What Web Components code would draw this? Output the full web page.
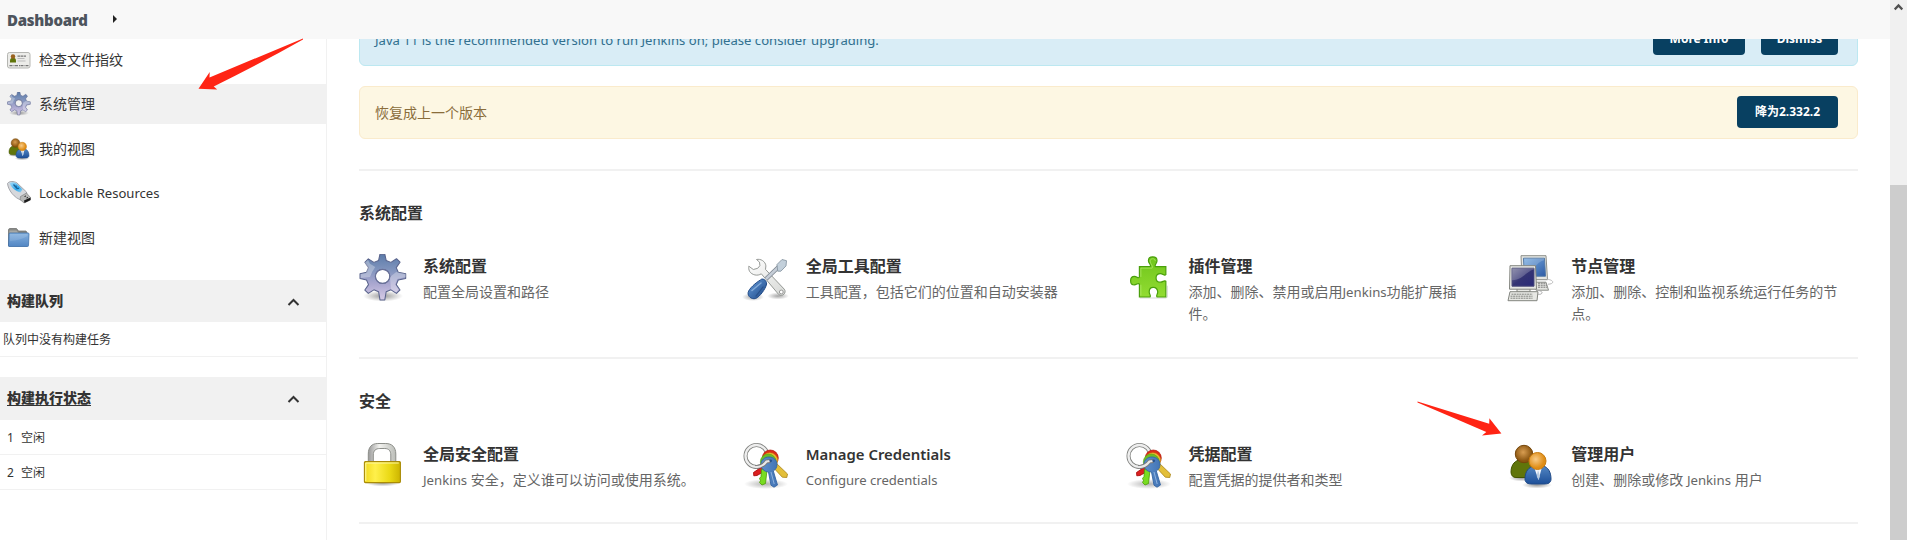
<!DOCTYPE html>
<html lang="zh-CN">
<head>
<meta charset="utf-8">
<title>系统管理 [Jenkins]</title>
<style>
html,body{margin:0;height:100%;overflow:hidden;background:#fff}
body{font:14px/22px "Noto Sans","Noto Sans CJK SC",sans-serif;color:#333}
</style>
</head>
<body>
<jk-page></jk-page>
<script>
const define = (name, html) => {
  const t = document.createElement('template');
  t.innerHTML = html;
  customElements.define(name, class extends HTMLElement {
    constructor() {
      super();
      this.attachShadow({mode: 'open'}).appendChild(t.content.cloneNode(true));
    }
  });
};

const ICONS = {
gear: `<defs><linearGradient id="g" x1="0" y1="0" x2="0" y2="1"><stop offset="0" stop-color="#5b7ba9"/><stop offset=".35" stop-color="#8194bd"/><stop offset=".65" stop-color="#aaa7d0"/><stop offset="1" stop-color="#d6cbe6"/></linearGradient><radialGradient id="s"><stop offset="0" stop-opacity=".4"/><stop offset="1" stop-opacity="0"/></radialGradient></defs>
<ellipse cx="24" cy="42" rx="20" ry="5.5" fill="url(#s)"/>
<g transform="translate(-1.6 -1.4) scale(1.05 1.02)"><path fill-rule="evenodd" fill="url(#g)" stroke="#59638c" stroke-linejoin="round" d="M21.5 1.5h4.6l1.3 6.2 4.5 1.9 5.3-3.6 3.4 3.4-3.6 5.3 1.9 4.6 7.1 1.4v4.7l-7.1 1.5-1.9 4.5 3.6 5.2-3.4 3.4-5.2-3.5-4.6 1.9-1.3 8h-4.6l-1.3-8-4.5-1.9-5.3 3.5-3.3-3.3 3.5-5.3-1.9-4.5-6.2-1.5v-4.7l6.2-1.4 1.9-4.6-3.5-5.2 3.3-3.4 5.3 3.5 4.5-1.9zM24 16.5a6.8 6.8 0 1 0 0 13.6 6.8 6.8 0 0 0 0-13.6z"/>
<path fill="#fff" opacity=".3" d="M12 11l5 3-3 5-2 5-9 1v-4l5-1 2-5-3-5 3-3zM31 24l6-5 9 2v3l-8 2-2 5 3 5-2 3-5-3z"/>
<circle cx="24" cy="23.3" r="7" fill="none" stroke="#6b7299"/></g>`,
tools: `<defs><linearGradient id="b" x1="0" x2="1" y1="0" y2="1"><stop stop-color="#6c9fda"/><stop offset=".5" stop-color="#4071b0"/><stop offset="1" stop-color="#234985"/></linearGradient><linearGradient id="w" x1="0" x2="1" y1="0" y2="1"><stop stop-color="#fff"/><stop offset="1" stop-color="#d6d8d5"/></linearGradient><radialGradient id="s"><stop offset="0" stop-opacity=".35"/><stop offset="1" stop-opacity="0"/></radialGradient></defs>
<ellipse cx="11" cy="43" rx="11" ry="4" fill="url(#s)"/><ellipse cx="36" cy="42" rx="11" ry="3.5" fill="url(#s)"/>
<path fill="url(#w)" stroke="#8b8e8b" stroke-width=".9" d="M14.500 5.500c4-1 9 1.800 9.400 6.400l-.4 3.500 18.700 19.700c3 3.600-2 8.400-5.600 5.300L19.300 19.800c-3.800 2.600-9.400 1.200-11.700-2.400-.9-1.800-1-3.400-.8-5.200l4.500 3.300 4.400-1.200 2.200-2.600-.4-3.600z"/>
<circle cx="39.300" cy="38" r="1.900" fill="#fff" stroke="#999"/>
<path d="M24 25L37 12.500" stroke="#818993" stroke-width="4.300"/><path d="M24 25L37 12.500" stroke="#c5cdd7" stroke-width="2.500"/>
<path d="M35 10.500l5-5 4.500 1.200-.5 5.200-5.100 5.300h-3.200z" fill="#c3d0db" stroke="#8997a4" stroke-width=".9"/>
<path fill="url(#b)" stroke="#204a87" d="M18.400 26c2-2.500 6.400.2 6.200 4-1 5-7 13-11 14.500-4 1.200-8-2.200-7.500-5.800.6-4 8.200-10.400 12.300-12.700z"/><path d="M10 36.500l9-7.500" stroke="#9dc0e8" stroke-width="1.500" opacity=".7" stroke-linecap="round"/><path d="M14 42l7-9" stroke="#1d4379" stroke-width="1.200" opacity=".6" stroke-linecap="round"/>`,
plugin: `<defs><linearGradient id="p" x1="0" y1="0" x2="0" y2="1"><stop stop-color="#6fc51a"/><stop offset="1" stop-color="#92dc32"/></linearGradient></defs>
<g transform="translate(-.8 -.6) scale(.98)"><path d="M16 45.500h27l1-1V33" fill="none" stroke="#bbb" opacity=".6"/>
<path fill="url(#p)" stroke="#4aa00b" stroke-width="1.200" d="M15.500 13.500h11.200c1-2.500-2-3.300-2-6 0-5.300 8.800-5.300 8.800 0 0 2.700-2.700 3.800-1.800 6h10.800v8.200c-1.500 1.500-3.100-1-5.500-1-6 0-6 8.700 0 8.700 2.400 0 4-2.500 5.500-1v16.100h-9c-1.500-1.300 1-2.900.7-5.400-.7-6-8.700-5.800-8.700.2 0 2.400 2.300 3.700.8 5.200H15.500V31.400c-1.200-2-2.900.8-5 .8-5.300 0-5.300-8.800 0-8.800 2.300 0 4.100 2.700 5 .8z"/>
<path fill="none" stroke="#b6ee75" opacity=".65" d="M17 24v-9h11.500c1.500-2-2-4-2-7.300 0-3 5.200-3 5.200 0M17 43V32"/></g>`,
nodes: `<defs><linearGradient id="a" x1="0" x2="1" y1="0" y2="1"><stop stop-color="#7baee1"/><stop offset="1" stop-color="#2d5aa5"/></linearGradient><linearGradient id="c" x1="0" x2="1" y1="0" y2="1"><stop stop-color="#77779a"/><stop offset=".5" stop-color="#343473"/><stop offset="1" stop-color="#2a2a78"/></linearGradient></defs>
<g transform="translate(-1 -.8)"><g stroke="#8c8e89" fill="#e4e5e1"><path d="M15 2.500h25l1.500 24H16z"/><path d="M29 29h11l2.500 8H30z"/></g><path d="M17.500 5h21l1 18h-21z" fill="url(#a)" stroke="#5077a5"/><path d="M18 19c10-1 12-10 20-12V5H18z" fill="#fff" opacity=".18"/>
<path d="M32 30h8m-8 2h9m-9 2h9" stroke="#777" stroke-dasharray="2 .7"/><path d="M41 26c8 1 7 5 1 5" fill="none" stroke="#bbb"/>
<g stroke="#83857f" fill="#e7e8e4"><path d="M11 35h13v4H11z"/><path d="M4 12.500h25.500l1 23.500H3.500z"/><path d="M4 38.500h28l-1 9H2z"/></g><path d="M6 15h22v18H6z" fill="url(#c)" stroke="#4a4a78"/><path d="M6 27c12-1 13-8 22-11v-1H6z" fill="#fff" opacity=".2"/>
<path d="M5.500 41h21m-22 2h22m-22 2h22" stroke="#838580" stroke-dasharray="2 .6"/><path d="M31 37c8 1 5 5 1 4" fill="none" stroke="#aaa"/></g>`,
lock: `<defs><linearGradient id="y"><stop stop-color="#f1d91e"/><stop offset=".3" stop-color="#fff04b"/><stop offset=".7" stop-color="#ead915"/><stop offset="1" stop-color="#ccb400"/></linearGradient><linearGradient id="v"><stop stop-color="#999"/><stop offset=".4" stop-color="#f2f2ef"/><stop offset="1" stop-color="#bbbdb8"/></linearGradient><radialGradient id="s"><stop offset="0" stop-opacity=".4"/><stop offset="1" stop-opacity="0"/></radialGradient></defs>
<g transform="translate(-.2 -1)"><ellipse cx="24" cy="42" rx="17" ry="3.500" fill="url(#s)"/>
<path d="M9.500 22V13C9.500 6 13 2.500 19 2.500h8C33 2.500 37 6 37 13v9h-5V14c0-4-2-6.500-6-6.500h-5c-4 0-6.500 2-6.500 6.500v8z" fill="url(#v)" stroke="#8c8e89"/>
<rect x="5.600" y="20.600" width="36" height="21" rx="1" fill="url(#y)" stroke="#a98b07" stroke-width="1.100"/><path d="M7 40V22h33" fill="none" stroke="#fff9a2"/></g>`,
keys: `<defs><linearGradient id="k" x1="0" x2="1"><stop stop-color="#5d8fcb"/><stop offset="1" stop-color="#4274b5"/></linearGradient><radialGradient id="s"><stop offset="0" stop-opacity=".3"/><stop offset="1" stop-opacity="0"/></radialGradient></defs>
<ellipse cx="24" cy="42" rx="22" ry="5" fill="url(#s)"/>
<circle cx="14.500" cy="14" r="11" fill="none" stroke="#80827f" stroke-width="4"/><circle cx="14.500" cy="14" r="11" fill="none" stroke="#eee" stroke-width="2.300"/>
<path d="M21 24l-9.500 6.500.3 3.300 3.200-.3 9-5z" fill="#db2020" stroke="#a40000" stroke-width=".8"/>
<circle cx="28.300" cy="16" r="8" fill="#dc2c17" stroke="#b01a0a" stroke-width=".7"/>
<path d="M33 20l12.500 12-.7 3.500-4.500-.3L29 23z" fill="#e3bf3a" stroke="#a98417" stroke-width=".8"/><circle cx="27.800" cy="18.500" r="7.800" fill="#eebb34" stroke="#c48a12" stroke-width=".5"/>
<path d="M19.500 27l5.500 1-1.500 13.500-3.500 1.500-2.500-2.500 1-2-1-2 1.500-2z" fill="#78dc21" stroke="#4e9a06" stroke-width=".8"/><circle cx="26.300" cy="20" r="8" fill="#6abd27" stroke="#4e9a06" stroke-width=".5"/>
<path fill="url(#k)" stroke="#3465a4" stroke-width=".9" d="M27 15c5 0 8 3.500 8 7.500 0 3-1.500 5.200-3.700 6.500l4.200 14-3.500 2.200-3-2L26.500 30C22 29.500 19 26.500 19 22.500c0-4.500 3.500-7.500 8-7.500z"/><path d="M29 30l3.200 12" stroke="#8fb3df"/>
<path d="M13 25q7 .5 11.500-5.500l4-.500" fill="none" stroke="#777" stroke-width="3.800"/><path d="M13 25q7 .5 11.500-5.500l3.500-.5" fill="none" stroke="#e8e8e8" stroke-width="2.200"/>
<circle cx="28.700" cy="18.800" r="1.400" fill="#26528f"/>`,
users: `<defs><radialGradient id="h" cx=".45" cy=".4"><stop stop-color="#d89d51"/><stop offset="1" stop-color="#8a5510"/></radialGradient><radialGradient id="o" cx=".4" cy=".4"><stop stop-color="#f8cb88"/><stop offset="1" stop-color="#df8d16"/></radialGradient><linearGradient id="n" x1="0" y1="0" x2="0" y2="1"><stop stop-color="#5286c2"/><stop offset="1" stop-color="#1d4f99"/></linearGradient><radialGradient id="s"><stop offset="0" stop-opacity=".4"/><stop offset="1" stop-opacity="0"/></radialGradient></defs>
<g transform="translate(1 0)"><ellipse cx="29" cy="43" rx="15" ry="3.500" fill="url(#s)"/><ellipse cx="14" cy="36" rx="13" ry="3.500" fill="url(#s)"/>
<path d="M3 30c0-8 5-12 9-12h8c4 1 8 5 7 12 0 4-3 5.500-7 5.500H8c-3 0-5-2-5-5.500z" fill="#60750a" stroke="#435400"/>
<circle cx="16" cy="12" r="8.700" fill="url(#h)" stroke="#75460a"/>
<path d="M17 37c0-8 4-12 9-13h9c5 1 8 6 8 13 0 4-3 5-7 5H24c-4 0-7-1-7-5z" fill="url(#n)" stroke="#204a87"/><path d="M26 25l4.500 13L34 25z" fill="#f5f7fa"/><path d="M30 28l-1.300 6 1.800 4 1.500-4z" fill="#b5c9df"/>
<circle cx="29.500" cy="19" r="8.500" fill="url(#o)" stroke="#c77b10"/></g>`,
card: `<rect x="1" y="9" width="45" height="31" rx="4" fill="#ecece9" stroke="#b5b6b2" stroke-width="2"/><path d="M6 26c0-5 2-6 6-6s6 1 6 6v3H6z" fill="#60750a"/><circle cx="12" cy="17" r="4.500" fill="#9a6320"/><path d="M21 16h18" stroke="#777" stroke-width="2.500" stroke-dasharray="5 1"/><path d="M21 21h14M21 26h16" stroke="#bbb" stroke-width="2"/><path d="M5 35h38" stroke="#777" stroke-width="2.500" stroke-dasharray="6 2 2 1"/>`,
usb: `<defs><linearGradient id="u" x1="0" x2="1" y1="0" y2="1"><stop stop-color="#a9dcf7"/><stop offset=".6" stop-color="#2ba8ed"/><stop offset="1" stop-color="#a5d5ef"/></linearGradient></defs>
<path d="M1 5C5 -1 14 1 19 3l20 19 1 10-9 7C14 35 2 17 1 5z" fill="#d6d8dc" stroke="#8d8f96" stroke-width="1.500"/><path d="M5 4c5-3 10-1 14 1l12 12-4 6c-9-2-18-9-22-19z" fill="url(#u)"/><path d="M13 7l8 9m-3-7 1 5 5 1" stroke="#176097" stroke-width="2.500" fill="none"/>
<path d="M27 31l12-7 8 9v5l-13 6-8-7z" fill="#b7b8b7" stroke="#696969"/><path d="M34 39l13-6v5l-12 6z" fill="#191919"/><path d="M35 31l3-1m1 4 3-1" stroke="#222" stroke-width="2"/>`,
folder: `<defs><linearGradient id="f" x1="0" y1="0" x2="0" y2="1"><stop stop-color="#85b1df"/><stop offset="1" stop-color="#5286c3"/></linearGradient></defs>
<path d="M3 40V8q0-3 3-3h13l4 5h15l2 3v27z" fill="#888a87" stroke="#6c6e6c" stroke-width="1.500"/><path d="M5 14V9h14l4 5z" fill="#a6a8a5"/><path d="M6 14h36q2 0 2 2l-1 23q0 2-2 2H4q-1 0-1-2l1-23q0-2 2-2z" fill="url(#f)" stroke="#3c6fa9" stroke-width="1.500"/><path d="M6 30q20-1 35-10V16H6z" fill="#fff" opacity=".12"/>`
};

customElements.define('jk-icon', class extends HTMLElement {
  connectedCallback() {
    this.attachShadow({mode: 'open'}).innerHTML =
      `<style>:host{display:block;width:48px;height:48px;flex:none}svg{display:block;width:100%;height:100%}</style>
       <svg viewBox="0 0 48 48">${ICONS[this.getAttribute('name')]}</svg>`;
  }
});

define('jk-header', `<style>
:host{display:flex;align-items:center;height:39px;background:#f8f8f8;box-sizing:border-box;padding:0 0 0 7px;font-weight:700;font-size:15px;color:#4d545d}
svg{margin:-1px 0 0 25px}
b{letter-spacing:-.28px}
</style><b><slot></slot></b><svg width="5" height="8"><path d="M0 0l4 4-4 4z" fill="#222"/></svg>`);

define('jk-task', `<style>
:host{display:flex;align-items:center;height:40px;margin-bottom:4.500px;padding-left:7px;gap:8px}
:host([active]){background:#f1f1f1}
::slotted(jk-icon){width:24px;height:24px}
</style><slot name="icon"></slot><span><slot></slot></span>`);

define('jk-pane', `<style>
:host{display:block}
header{display:flex;align-items:center;justify-content:space-between;box-sizing:border-box;height:var(--h,42px);padding:0 26px 1px 7px;background:#f1f1f1;font-weight:700}
svg{margin-top:2px}
:host([link]) header b{text-decoration:underline;text-underline-offset:2px}
</style><header><b><slot name="title"></slot></b><svg width="13" height="8"><path d="M1.500 7l5-5 5 5" fill="none" stroke="#333" stroke-width="2"/></svg></header><slot></slot>`);

define('jk-row', `<style>
:host{display:flex;align-items:center;gap:7px;box-sizing:border-box;height:35px;padding:2px 0 0 7px;border-bottom:1px solid #f1f1f1;font-size:12px}
</style><slot></slot>`);

define('jk-button', `<style>
:host{display:flex;align-items:center;justify-content:center;height:32px;border-radius:4px;background:#084061;color:#fff;font-size:12px;font-weight:700}
</style><slot></slot>`);

define('jk-alert', `<style>
:host{display:flex;align-items:center;gap:16px;box-sizing:border-box;height:53px;padding:0 19px 1px 15px;border:1px solid #faebcc;border-radius:6px;background:#fdf7e3;color:#8a6d3b}
:host([info]){background:#d9edf6;border-color:#bce8f1;color:#31708f}
span{flex:1;margin-top:1px}
</style><span><slot></slot></span><slot name="actions"></slot>`);

define('jk-section', `<style>
:host{display:block;box-sizing:border-box;border-top:2px solid #f1f1f1}
h2{margin:0;padding-top:31px;font-size:16px;line-height:22px;font-weight:700}
.grid{display:grid;grid-template-columns:repeat(4,1fr);column-gap:32px;padding-top:30px}
</style><h2><slot name="title"></slot></h2><div class="grid"><slot></slot></div>`);

define('jk-item', `<style>
:host{display:flex;gap:16px;align-items:flex-start}
dl{margin:0;flex:1;min-width:0}
dt{font-size:16px;line-height:24px;font-weight:700}
:host([latin]) dt{font-weight:600;font-size:14.900px}
dd{margin:3px 0 0;color:#666}
</style><slot name="icon"></slot><dl><dt><slot name="title"></slot></dt><dd><slot></slot></dd></dl>`);

define('jk-scrollbar', `<style>
:host{display:flex;flex-direction:column;width:17px;height:540px;background:#f0f0f0}
.up{height:185px;display:flex;justify-content:center}
svg{margin-top:3px}
.thumb{flex:1;background:#cdcdcd}
</style><div class="up"><svg width="9" height="8"><path d="M.7 6.500l3.800-4 3.800 4" fill="none" stroke="#505050" stroke-width="2.300"/></svg></div><div class="thumb"></div>`);

define('jk-arrow', `<style>
:host{position:absolute;inset:0;pointer-events:none}
svg{display:block}
</style><svg width="1907" height="540" fill="#ff2414"><path d="M303 38.500L209.500 77.500l.2-5.500-11.200 16.700 18.700.8-3.500-3q45-22 89.300-47zM1417.500 401.600l71.700 22.100.2-5.400 12 15.300-19.400 2 4.300-3.500q-34-15-68.800-29.700z"/></svg>`);

define('jk-page', `<style>
:host{display:grid;position:relative;grid-template-columns:1890px 17px;width:1907px;height:540px;overflow:hidden}
.body{display:grid;grid-template-columns:327px 1fr;height:501px;overflow:hidden}
aside{border-right:1px solid #f1f1f1;padding-top:.5px;height:501px;box-sizing:border-box}
.queue{margin-top:22.500px}
.exec{margin-top:20px;--h:43px}
.none{padding-left:3px}
main{padding:0 32px}
.first{margin-top:-26px;margin-bottom:20px}
.second{margin-bottom:30px}
.s1{height:188px}.s2{height:165px}
.end{border-top:2px solid #f1f1f1}
.lr,.java,.cfg{font-size:13.100px}
.j{font-size:13.200px}
</style>
<div>
<jk-header>Dashboard</jk-header>
<div class="body">
<aside>
<jk-task><jk-icon slot="icon" name="card"></jk-icon>检查文件指纹</jk-task>
<jk-task active><jk-icon slot="icon" name="gear"></jk-icon>系统管理</jk-task>
<jk-task><jk-icon slot="icon" name="users"></jk-icon>我的视图</jk-task>
<jk-task><jk-icon slot="icon" name="usb"></jk-icon><span class="lr">Lockable Resources</span></jk-task>
<jk-task><jk-icon slot="icon" name="folder"></jk-icon>新建视图</jk-task>
<jk-pane class="queue"><span slot="title">构建队列</span><jk-row class="none">队列中没有构建任务</jk-row></jk-pane>
<jk-pane class="exec" link><span slot="title">构建执行状态</span><jk-row><span>1</span><span>空闲</span></jk-row><jk-row><span>2</span><span>空闲</span></jk-row></jk-pane>
</aside>
<main>
<jk-alert info class="first"><span class="java">Java 11 is the recommended version to run Jenkins on; please consider upgrading.</span><jk-button slot="actions" style="width:92px">More Info</jk-button><jk-button slot="actions" style="width:77px">Dismiss</jk-button></jk-alert>
<jk-alert class="second">恢复成上一个版本<jk-button slot="actions" style="width:101px">降为2.332.2</jk-button></jk-alert>
<jk-section class="s1"><span slot="title">系统配置</span>
<jk-item><jk-icon slot="icon" name="gear"></jk-icon><span slot="title">系统配置</span>配置全局设置和路径</jk-item>
<jk-item><jk-icon slot="icon" name="tools"></jk-icon><span slot="title">全局工具配置</span>工具配置，包括它们的位置和自动安装器</jk-item>
<jk-item><jk-icon slot="icon" name="plugin"></jk-icon><span slot="title">插件管理</span>添加、删除、禁用或启用<span class="j">Jenkins</span>功能扩展插件。</jk-item>
<jk-item><jk-icon slot="icon" name="nodes"></jk-icon><span slot="title">节点管理</span>添加、删除、控制和监视系统运行任务的节点。</jk-item>
</jk-section>
<jk-section class="s2"><span slot="title">安全</span>
<jk-item><jk-icon slot="icon" name="lock"></jk-icon><span slot="title">全局安全配置</span><span class="j">Jenkins</span> 安全，定义谁可以访问或使用系统。</jk-item>
<jk-item latin><jk-icon slot="icon" name="keys"></jk-icon><span slot="title">Manage Credentials</span><span class="cfg">Configure credentials</span></jk-item>
<jk-item><jk-icon slot="icon" name="keys"></jk-icon><span slot="title">凭据配置</span>配置凭据的提供者和类型</jk-item>
<jk-item><jk-icon slot="icon" name="users"></jk-icon><span slot="title">管理用户</span>创建、删除或修改 <span class="j">Jenkins</span> 用户</jk-item>
</jk-section>
<div class="end"></div>
</main>
</div>
</div>
<jk-scrollbar></jk-scrollbar>
<jk-arrow></jk-arrow>`);
</script>
</body>
</html>
